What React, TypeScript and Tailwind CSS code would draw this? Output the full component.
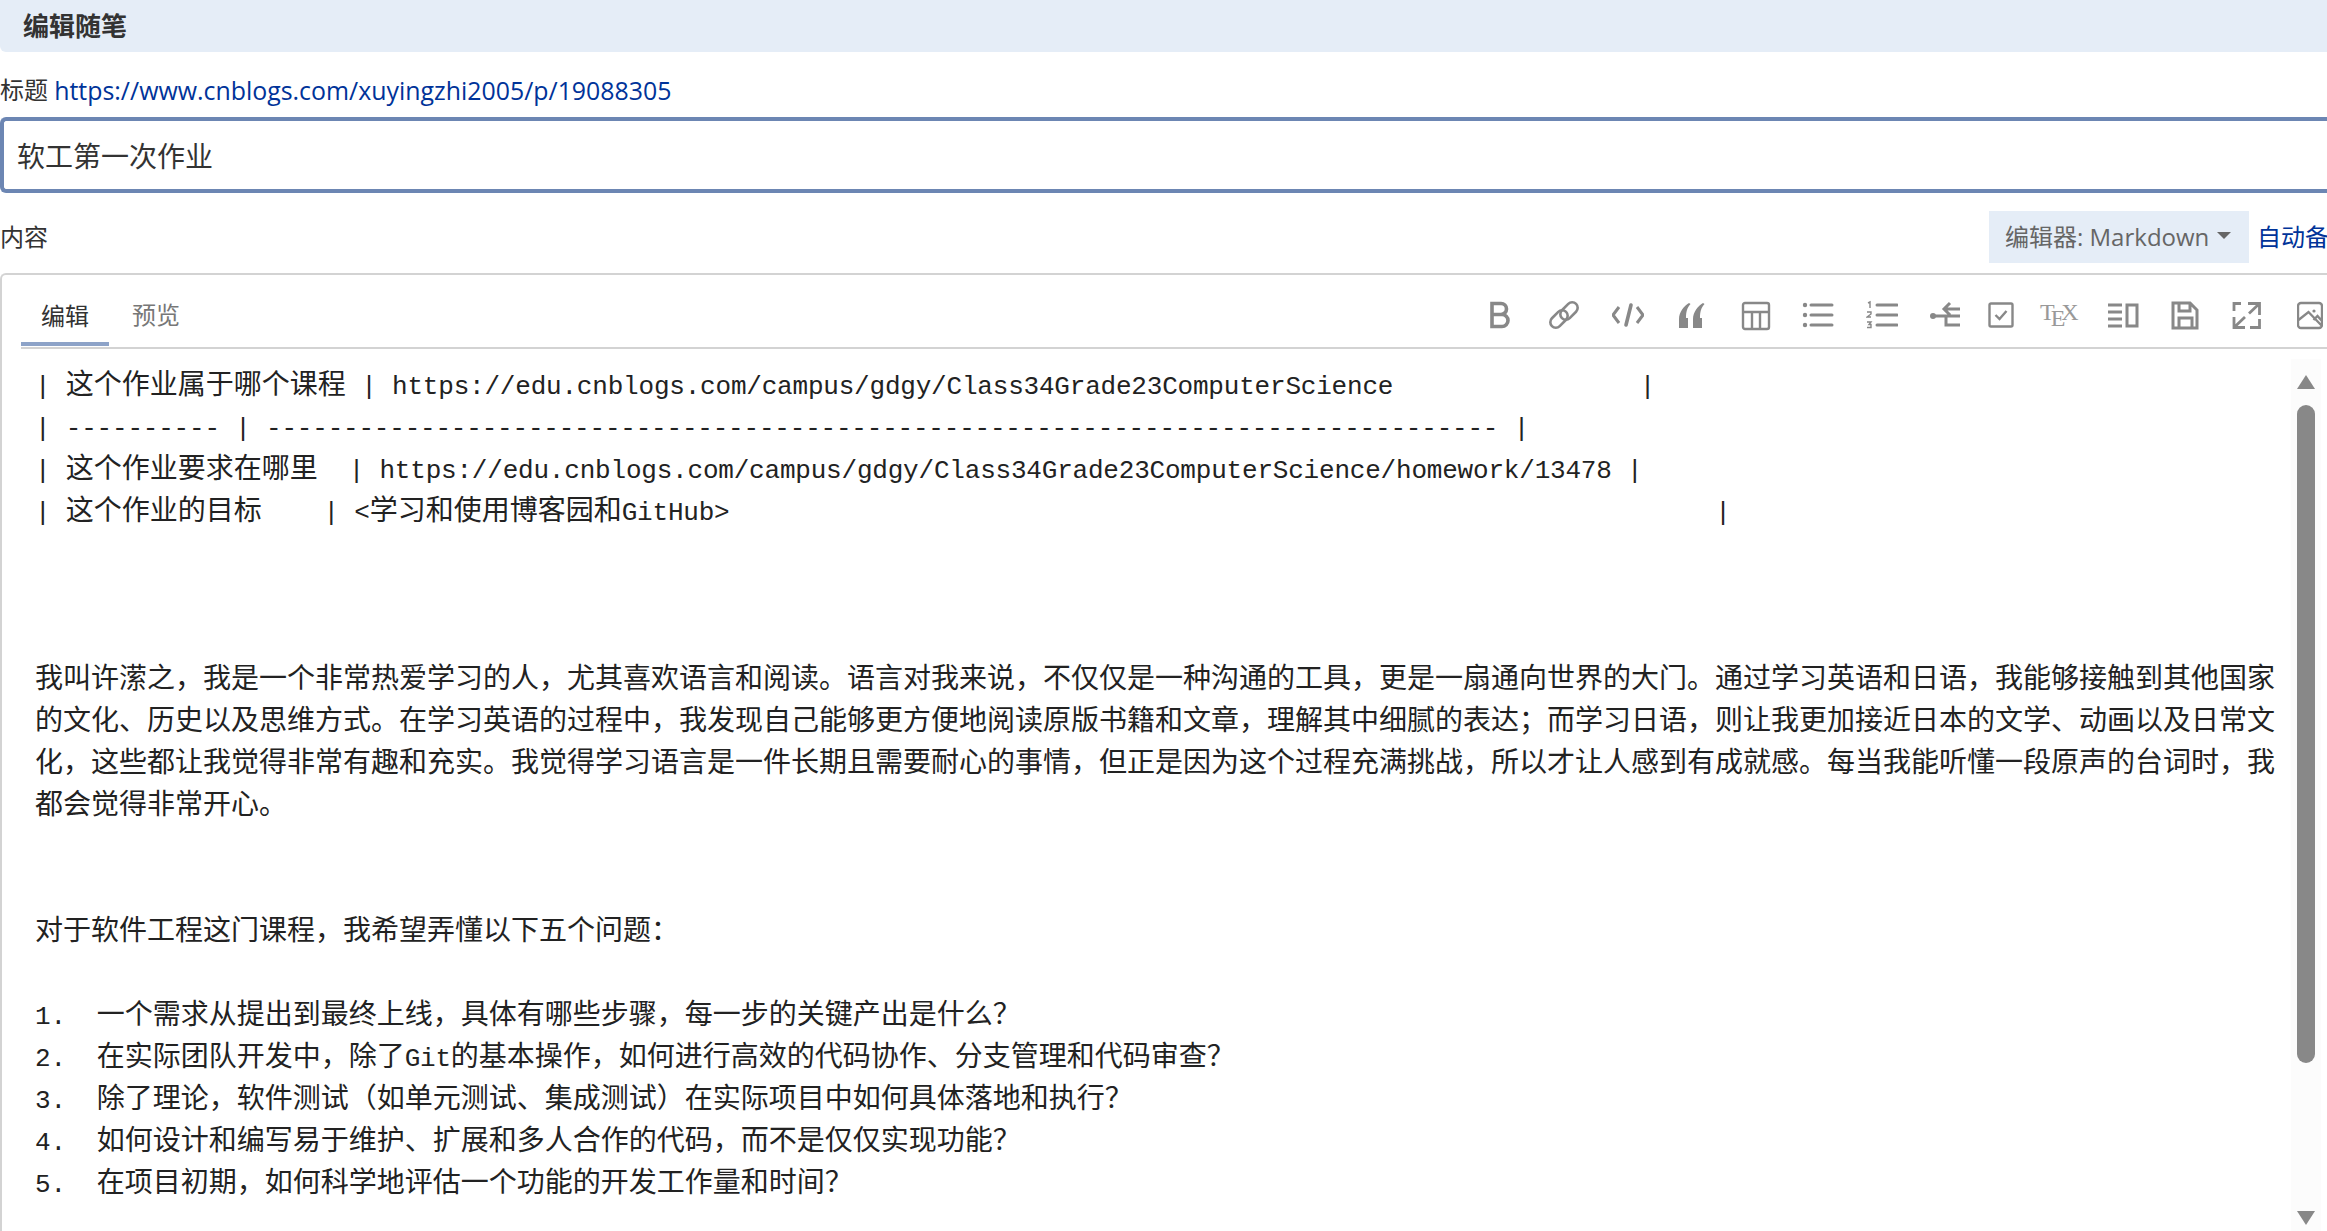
const sans = "font-['Open_Sans','Noto_Sans_CJK_SC',sans-serif]";

function M({ children }: { children: string }) {
    return <span className="font-['Liberation_Mono','Noto_Sans_CJK_SC',monospace] text-[26px] tracking-[-0.2px]">{children}</span>;
}

function Line({ children }: { children?: React.ReactNode }) {
    return <div className="h-[42px] leading-[42px]">{children}</div>;
}

const icon = "w-8 h-8 shrink-0 fill-none stroke-[#888888]";
const dot = "fill-[#888888] stroke-none";

function Toolbar() {
    return (
        <div className="ml-auto flex items-center gap-[32px] pr-[4px] pt-[16px] self-start h-[64px]">
            {/* bold */}
            <svg viewBox="0 0 32 32" strokeWidth="3.6" className={icon}><path d="M8 4.500h9a5.500 5.500 0 0 1 0 11H8zM8 15.500h10a6 6 0 0 1 0 12H8z" /></svg>
            {/* link */}
            <svg viewBox="0 0 32 32" strokeWidth="2.6" className={icon}>
                <rect x="1" y="14.500" width="20" height="11" rx="5.500" transform="rotate(-45 11 20)" />
                <rect x="11" y="6.500" width="20" height="11" rx="5.500" transform="rotate(-45 21 12)" />
            </svg>
            {/* code */}
            <svg viewBox="0 0 32 32" strokeWidth="3" className={icon}><path d="M7 8l-6 8 6 8M25 8l6 8-6 8" /><path d="M19 6l-5 20" strokeWidth="3.600" strokeLinecap="round" /></svg>
            {/* quote */}
            <svg viewBox="0 0 32 32" className="w-8 h-8 shrink-0 fill-[#888888]"><path d="M3 29V20C3 13 8 7 13 4l1.500 1C11 9 10 13 10 19h2v10zM17 29V20c0-7 5-13 10-16l1.500 1C25 9 24 13 24 19h2v10z" /></svg>
            {/* table */}
            <svg viewBox="0 0 32 32" strokeWidth="2.400" className={icon}><path d="M5 4h22a2 2 0 0 1 2 2v22a2 2 0 0 1-2 2H5a2 2 0 0 1-2-2V6a2 2 0 0 1 2-2zM3 13h26M12 13v17M20 13v17" /></svg>
            {/* unordered list */}
            <svg viewBox="0 0 32 32" strokeWidth="3" strokeLinecap="round" className={`${icon} -ml-[2px]`}><path d="M9 6h21M9 16h21M9 26h21" /><circle cx="3" cy="6" r="2.200" className={dot} /><circle cx="3" cy="16" r="2.200" className={dot} /><circle cx="3" cy="26" r="2.200" className={dot} /></svg>
            {/* ordered list */}
            <svg viewBox="0 0 32 32" strokeWidth="3" strokeLinecap="round" className={icon}><path d="M11 6h20M11 16h20M11 26h20" /><path d="M2 4l2-1v6M1 13h4v2l-4 3h4M1 23h4l-2 2.500h2v3H1" strokeWidth="1.400" strokeLinecap="butt" /></svg>
            {/* back */}
            <svg viewBox="0 0 32 32" strokeWidth="3" className={icon}><path d="M14 10h16M20 4l-6 6 6 6M30 17H16v9h14M16 17H5" /><circle cx="3" cy="17" r="3" className={dot} /></svg>
            {/* checkbox */}
            <svg viewBox="0 0 26 26" strokeWidth="2.400" className="w-[26px] h-[26px] shrink-0 -ml-[6px] fill-none stroke-[#888888]"><path d="M3 1.500h20a1.500 1.500 0 0 1 1.500 1.500v20a1.500 1.500 0 0 1-1.500 1.500H3A1.500 1.500 0 0 1 1.500 23V3A1.500 1.500 0 0 1 3 1.500zM7.500 13l4 4 7-8" /></svg>
            {/* tex */}
            <span className="w-10 shrink-0 -ml-[6px] flex text-[#999999] font-['Liberation_Serif',serif] text-[24px] leading-none">T<span className="-ml-1 mt-[6px]">E</span><span className="-ml-1">X</span></span>
            {/* split view */}
            <svg viewBox="0 0 32 32" strokeWidth="3" className={`${icon} -ml-[5px]`}><path d="M1 6h14M1 13h14M1 20h14M1 27h14M20 6h10v21H20z" /></svg>
            {/* save */}
            <svg viewBox="0 0 32 32" strokeWidth="3" className={`${icon} -ml-[2px]`}><path d="M4 4h17l7 7v18H4zM10 4v8h11V4M10 29V19h13v10" /></svg>
            {/* fullscreen */}
            <svg viewBox="0 0 32 32" strokeWidth="2.800" className={`${icon} -ml-[2px]`}><path d="M3 12V4.500h7M17 4.500h11.500V16M28.500 4.500L18 14.500M3 18v10.500h11M3 28.500L14 18M19 28.500h9.500V20" /></svg>
            {/* image */}
            <svg viewBox="0 0 26 32" strokeWidth="2.400" className="w-[26px] h-8 shrink-0 ml-[2px] fill-none stroke-[#888888]"><path d="M4 4h18a3 3 0 0 1 3 3v19a3 3 0 0 1-3 3H4a3 3 0 0 1-3-3V7a3 3 0 0 1 3-3zM1.500 21l10-8 13.500 14M16.500 21l4-4 4.500 5" /><circle cx="17" cy="12" r="1.600" className={dot} /></svg>
        </div>
    );
}

export default function App() {
    return (
        <div className={`h-[1231px] w-[2327px] overflow-hidden bg-white text-[#333333] ${sans}`}>
            <div className="h-[52px] bg-[#e5edf7] rounded-bl-md pl-[23px] flex items-center text-[26px] font-bold">编辑随笔</div>

            <div className="mt-[21px] h-[34px] flex items-center text-[24px] leading-none">
                标题&nbsp;<a className="text-[#003399] text-[24.9px]">https://www.cnblogs.com/xuyingzhi2005/p/19088305</a>
            </div>

            <div className="mt-[10px] h-[76px] border-[4px] border-r-0 border-[#6c86b3] rounded-l-md flex items-center pl-[13px] pt-[2px] text-[28px]">软工第一次作业</div>

            <div className="mt-[18px] h-[52px] flex items-center text-[24px]">
                <span>内容</span>
                <div className="ml-auto flex items-center">
                    <div className="w-[260px] h-[52px] bg-[#e5edf7] text-[#666666] flex items-center pl-[16px] whitespace-nowrap">
                        编辑器: Markdown
                        <span className="ml-[8px] mt-[-4px] border-x-[7px] border-t-[7px] border-x-transparent border-t-[#666666]" />
                    </div>
                    <div className="w-[70px] ml-[8px] text-[#003399] whitespace-nowrap overflow-hidden">自动备份</div>
                </div>
            </div>

            <div className="mt-[10px] h-[958px] border-l-2 border-t-2 border-[#d3d3d3] rounded-tl-md relative">
                <div className="ml-[19px] h-[74px] border-b-2 border-[#d3d3d3] flex items-start text-[24px]">
                    <div className="w-[88px] h-[71px] border-b-4 border-[#8da3c8] pt-[14px] flex items-center justify-center">编辑</div>
                    <div className="w-[88px] h-[71px] ml-[3px] pt-[9px] flex items-center justify-center text-[#777777]">预览</div>
                    <Toolbar />
                </div>

                <div className="pl-[33px] pt-[13px] text-[28px] text-[#222222] whitespace-pre">
                    <Line><M>| </M>这个作业属于哪个课程<M> | https://edu.cnblogs.com/campus/gdgy/Class34Grade23ComputerScience                |</M></Line>
                    <Line><M>| ---------- | -------------------------------------------------------------------------------- |</M></Line>
                    <Line><M>| </M>这个作业要求在哪里<M>  | https://edu.cnblogs.com/campus/gdgy/Class34Grade23ComputerScience/homework/13478 |</M></Line>
                    <Line><M>| </M>这个作业的目标<M>    | &lt;</M>学习和使用博客园和<M>GitHub&gt;</M><M>{"                                                                |"}</M></Line>
                    <Line />
                    <Line />
                    <Line />
                    <Line>我叫许潆之，我是一个非常热爱学习的人，尤其喜欢语言和阅读。语言对我来说，不仅仅是一种沟通的工具，更是一扇通向世界的大门。通过学习英语和日语，我能够接触到其他国家</Line>
                    <Line>的文化、历史以及思维方式。在学习英语的过程中，我发现自己能够更方便地阅读原版书籍和文章，理解其中细腻的表达；而学习日语，则让我更加接近日本的文学、动画以及日常文</Line>
                    <Line>化，这些都让我觉得非常有趣和充实。我觉得学习语言是一件长期且需要耐心的事情，但正是因为这个过程充满挑战，所以才让人感到有成就感。每当我能听懂一段原声的台词时，我</Line>
                    <Line>都会觉得非常开心。</Line>
                    <Line />
                    <Line />
                    <Line>对于软件工程这门课程，我希望弄懂以下五个问题：</Line>
                    <Line />
                    <Line><M>1.  </M>一个需求从提出到最终上线，具体有哪些步骤，每一步的关键产出是什么？</Line>
                    <Line><M>2.  </M>在实际团队开发中，除了<M>Git</M>的基本操作，如何进行高效的代码协作、分支管理和代码审查？</Line>
                    <Line><M>3.  </M>除了理论，软件测试（如单元测试、集成测试）在实际项目中如何具体落地和执行？</Line>
                    <Line><M>4.  </M>如何设计和编写易于维护、扩展和多人合作的代码，而不是仅仅实现功能？</Line>
                    <Line><M>5.  </M>在项目初期，如何科学地评估一个功能的开发工作量和时间？</Line>
                </div>

                {/* scrollbar */}
                <div className="absolute right-[6px] top-[84px] bottom-0 w-[30px] bg-[#fcfcfc] flex flex-col items-center pt-[16px]">
                    <div className="border-x-[9px] border-b-[14px] border-x-transparent border-b-[#888888]" />
                    <div className="mt-[16px] w-[18px] h-[658px] rounded-full bg-[#888888]" />
                    <div className="mt-auto mb-[6px] border-x-[9px] border-t-[14px] border-x-transparent border-t-[#888888]" />
                </div>
            </div>
        </div>
    );
}
